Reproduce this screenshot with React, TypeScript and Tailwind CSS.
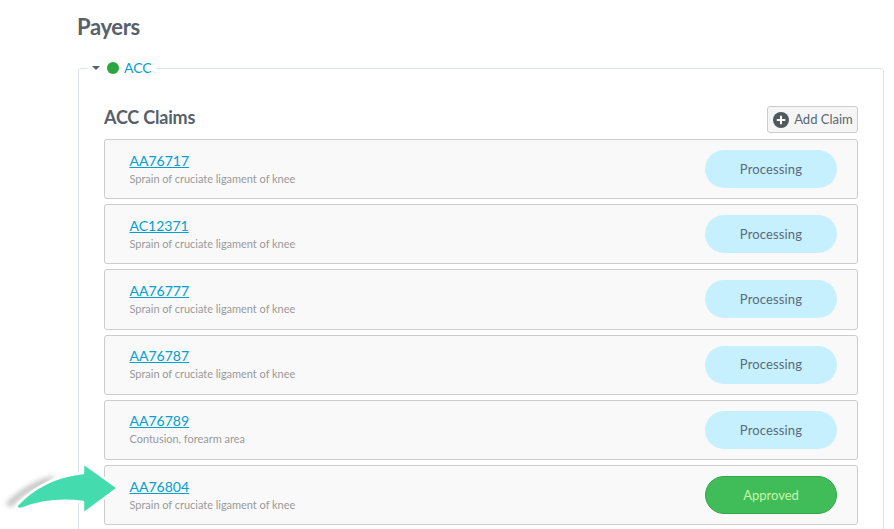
import { Plus } from 'lucide-react';

const claims = [
  { id: 'AA76717', note: 'Sprain of cruciate ligament of knee', status: 'Processing' },
  { id: 'AC12371', note: 'Sprain of cruciate ligament of knee', status: 'Processing' },
  { id: 'AA76777', note: 'Sprain of cruciate ligament of knee', status: 'Processing' },
  { id: 'AA76787', note: 'Sprain of cruciate ligament of knee', status: 'Processing' },
  { id: 'AA76789', note: 'Contusion, forearm area', status: 'Processing' },
  { id: 'AA76804', note: 'Sprain of cruciate ligament of knee', status: 'Approved' },
];

function ClaimRow({ id, note, status }: { id: string; note: string; status: string }) {
  const approved = status === 'Approved';
  return (
    <div className="flex h-[60.2px] items-center justify-between rounded-[3px] border border-[#cccccc] bg-[#f9f9f9] pl-[24.5px] pr-5">
      <div className="flex flex-col">
        <a href="#" className="text-sm leading-[18px] text-[#00a0d2] underline">
          {id}
        </a>
        <span className="text-[11px] leading-[17px] tracking-[-0.03px] text-[#999999]">{note}</span>
      </div>
      <span
        className={
          approved
            ? 'flex h-[38px] w-[132px] items-center justify-center rounded-[19px] border border-[#30a84a] bg-[#40bc58] pt-px text-[13px] text-[#c8f7a8]'
            : 'flex h-[38px] w-[132px] items-center justify-center rounded-[19px] bg-[#c7f0ff] pt-px text-[13px] tracking-[0.15px] text-[#5a6a7a]'
        }
      >
        {status}
      </span>
    </div>
  );
}

export default function App() {
  return (
    <div className="relative h-[529px] overflow-hidden bg-white pl-[78px] pr-[10px] font-['Lato',sans-serif]">
      <h1 className="-ml-px pt-[13px] text-[22px] font-bold leading-[28px] tracking-[-0.35px] text-[#56616b]">Payers</h1>

      <fieldset className="mt-[18px] rounded-[3px] border border-[#dde4e8] pb-6 pl-[25px] pr-[25px] pt-[29px]">
        <legend className="ml-[-17px] flex items-center px-[5px] text-sm leading-[18px] text-[#00a0d2]">
          <span className="mr-[7px] h-0 w-0 border-x-[4px] border-t-[4px] border-x-transparent border-t-[#56616b]" />
          <span className="mr-[5px] h-3 w-3 rounded-full bg-[#28a63f]" />
          ACC
        </legend>

        <div className="flex items-start justify-between pb-[6px]">
          <h2 className="text-lg font-bold leading-[23px] tracking-[-0.2px] text-[#56616b]">ACC Claims</h2>
          <button className="flex h-[27px] w-[91px] items-center justify-center gap-[5px] rounded-[3px] border border-[#cccccc] bg-[#f5f5f5] pl-px text-[13px] text-[#5a6672]">
            <span className="flex h-4 w-4 items-center justify-center rounded-full bg-[#50595f]">
              <Plus size={12} strokeWidth={4} className="text-white" />
            </span>
            Add Claim
          </button>
        </div>

        <div className="flex flex-col gap-[5px]">
          {claims.map((c) => (
            <ClaimRow key={c.id} {...c} />
          ))}
        </div>
      </fieldset>

      <svg className="absolute left-0 top-[455px]" width="125" height="74" viewBox="0 0 125 74">
        <defs>
          <filter id="arrowShadow" x="-30%" y="-50%" width="160%" height="200%">
            <feGaussianBlur stdDeviation="2.5" />
          </filter>
        </defs>
        <path d="M5 49 C18 36 34 25 56 20 L46 30 C32 35 20 42 12 52 Z" fill="#8a8a8a" opacity="0.5" filter="url(#arrowShadow)" />
        <path
          d="M17 50 C33 33 55 21 83 18 L83 8 L118 33 L83 59 L83 47 C60 44 40 47 24 53 Q16 56 17 50 Z"
          fill="#44dcae"
          stroke="#ffffff"
          strokeWidth="2.5"
          strokeLinejoin="round"
        />
      </svg>
    </div>
  );
}
